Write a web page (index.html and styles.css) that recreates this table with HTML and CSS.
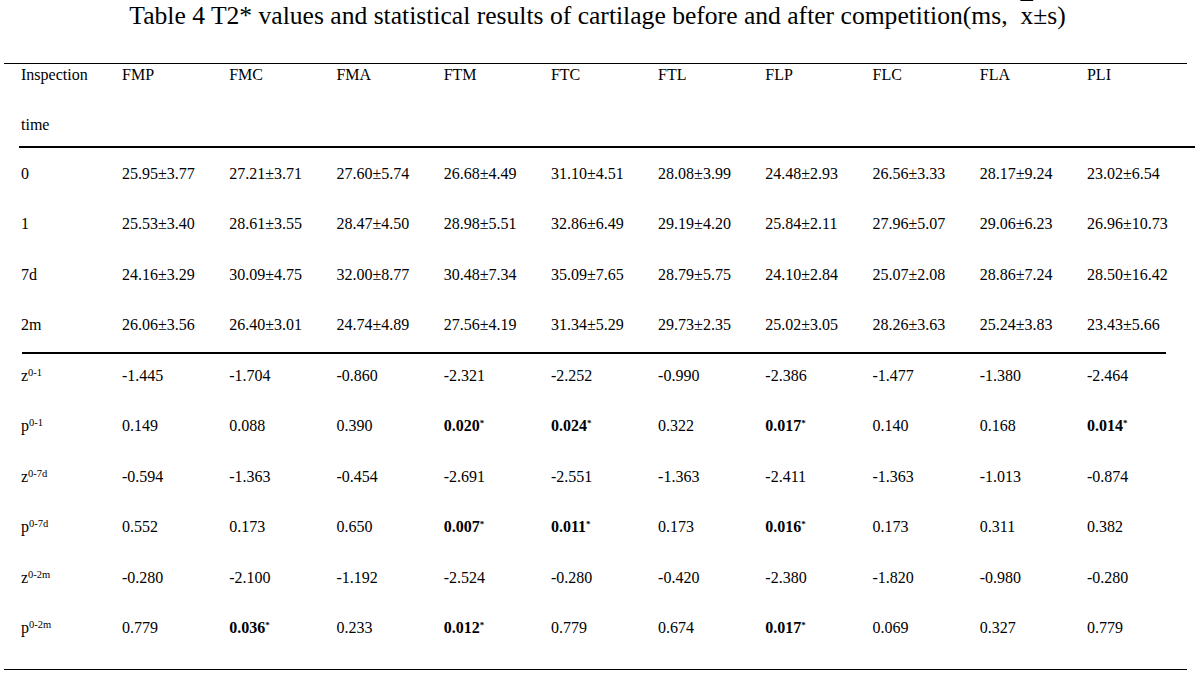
FILE: index.html
```html
<!DOCTYPE html>
<html>
<head>
<meta charset="utf-8">
<link rel="stylesheet" href="styles.css">
</head>
<body>
<h1 class="title">Table 4 T2* values and statistical results of cartilage before and after competition(ms,&nbsp;&nbsp;<span class="xbar">x</span>±s)</h1>
<div class="rule rule-top"></div>
<div class="head">
  <div class="row">
    <span>Inspection</span><span>FMP</span><span>FMC</span><span>FMA</span><span>FTM</span><span>FTC</span><span>FTL</span><span>FLP</span><span>FLC</span><span>FLA</span><span>PLI</span>
  </div>
  <div class="row">
    <span>time</span>
  </div>
</div>
<div class="body body1">
  <div class="row"><span>0</span><span>25.95±3.77</span><span>27.21±3.71</span><span>27.60±5.74</span><span>26.68±4.49</span><span>31.10±4.51</span><span>28.08±3.99</span><span>24.48±2.93</span><span>26.56±3.33</span><span>28.17±9.24</span><span>23.02±6.54</span></div>
  <div class="row"><span>1</span><span>25.53±3.40</span><span>28.61±3.55</span><span>28.47±4.50</span><span>28.98±5.51</span><span>32.86±6.49</span><span>29.19±4.20</span><span>25.84±2.11</span><span>27.96±5.07</span><span>29.06±6.23</span><span>26.96±10.73</span></div>
  <div class="row"><span>7d</span><span>24.16±3.29</span><span>30.09±4.75</span><span>32.00±8.77</span><span>30.48±7.34</span><span>35.09±7.65</span><span>28.79±5.75</span><span>24.10±2.84</span><span>25.07±2.08</span><span>28.86±7.24</span><span>28.50±16.42</span></div>
  <div class="row"><span>2m</span><span>26.06±3.56</span><span>26.40±3.01</span><span>24.74±4.89</span><span>27.56±4.19</span><span>31.34±5.29</span><span>29.73±2.35</span><span>25.02±3.05</span><span>28.26±3.63</span><span>25.24±3.83</span><span>23.43±5.66</span></div>
</div>
<div class="rule rule-mid"></div>
<div class="body body2">
  <div class="row"><span>z<sup>0-1</sup></span><span>-1.445</span><span>-1.704</span><span>-0.860</span><span>-2.321</span><span>-2.252</span><span>-0.990</span><span>-2.386</span><span>-1.477</span><span>-1.380</span><span>-2.464</span></div>
  <div class="row"><span>p<sup>0-1</sup></span><span>0.149</span><span>0.088</span><span>0.390</span><span class="sig">0.020<sup class="ast">*</sup></span><span class="sig">0.024<sup class="ast">*</sup></span><span>0.322</span><span class="sig">0.017<sup class="ast">*</sup></span><span>0.140</span><span>0.168</span><span class="sig">0.014<sup class="ast">*</sup></span></div>
  <div class="row"><span>z<sup>0-7d</sup></span><span>-0.594</span><span>-1.363</span><span>-0.454</span><span>-2.691</span><span>-2.551</span><span>-1.363</span><span>-2.411</span><span>-1.363</span><span>-1.013</span><span>-0.874</span></div>
  <div class="row"><span>p<sup>0-7d</sup></span><span>0.552</span><span>0.173</span><span>0.650</span><span class="sig">0.007<sup class="ast">*</sup></span><span class="sig">0.011<sup class="ast">*</sup></span><span>0.173</span><span class="sig">0.016<sup class="ast">*</sup></span><span>0.173</span><span>0.311</span><span>0.382</span></div>
  <div class="row"><span>z<sup>0-2m</sup></span><span>-0.280</span><span>-2.100</span><span>-1.192</span><span>-2.524</span><span>-0.280</span><span>-0.420</span><span>-2.380</span><span>-1.820</span><span>-0.980</span><span>-0.280</span></div>
  <div class="row"><span>p<sup>0-2m</sup></span><span>0.779</span><span class="sig">0.036<sup class="ast">*</sup></span><span>0.233</span><span class="sig">0.012<sup class="ast">*</sup></span><span>0.779</span><span>0.674</span><span class="sig">0.017<sup class="ast">*</sup></span><span>0.069</span><span>0.327</span><span>0.779</span></div>
</div>
<div class="rule rule-bottom"></div>
</body>
</html>
```

FILE: styles.css
```css
html, body {
  margin: 0;
  padding: 0;
  background: #fff;
}
body {
  width: 1195px;
  height: 681px;
  overflow: hidden;
  font-family: "Liberation Serif", "Times New Roman", serif;
  color: #000;
  font-size: 16px;
}
.title {
  margin: 0;
  padding-top: 2.2px;
  height: 60.8px;
  font-size: 25.6px;
  font-weight: normal;
  line-height: 28px;
  text-align: center;
  white-space: nowrap;
}
.xbar {
  text-decoration: overline;
  text-decoration-thickness: 1px;
}
.rule {
  height: 0;
}
.rule-top {
  border-top: 1px solid #000;
  margin: 0 8px 0 4px;
}
.rule-mid {
  border-top: 2px solid #000;
  margin: 0 29px 0 22px;
}
.rule-bottom {
  border-top: 1px solid #000;
  margin: 0 8px 0 4px;
}
.row {
  display: grid;
  grid-template-columns: 101px repeat(9, 107.22px) auto;
  height: 20px;
  line-height: 20px;
  white-space: nowrap;
}
.head {
  margin-left: 19px;
  padding: 0.6px 0 11.4px 2px;
  border-bottom: 2px solid #000;
  display: flex;
  flex-direction: column;
  gap: 30px;
}
.body {
  padding-left: 21px;
  display: flex;
  flex-direction: column;
}
.body1 {
  gap: 30.4px;
  padding-top: 16.1px;
  padding-bottom: 16.7px;
}
.body2 {
  gap: 30.6px;
  padding-top: 11.6px;
  padding-bottom: 30.4px;
}
sup {
  font-size: 10.5px;
  line-height: 0;
  vertical-align: 5px;
}
.sig {
  font-weight: bold;
}
sup.ast {
  font-size: 9px;
  font-weight: bold;
  vertical-align: 5px;
}
```
